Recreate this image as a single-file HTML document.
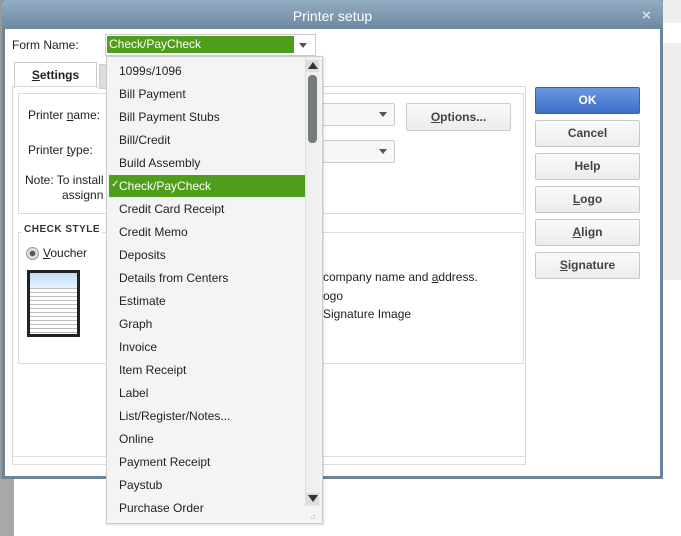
<!DOCTYPE html><html><head><style>
body{margin:0;width:681px;height:536px;position:relative;overflow:hidden;background:#fff;font-family:"Liberation Sans",sans-serif;font-size:12px;color:#222}
.a{position:absolute}
.btn{position:absolute;left:535px;width:103px;height:25px;border:1px solid #c8c8c8;border-radius:2px;background:linear-gradient(#fafafa,#ececec);font-weight:bold;color:#444;text-align:center;line-height:25px}
.it{position:absolute;left:119px;font-size:12px;color:#222}
.arr{position:absolute;width:0;height:0;border-left:4px solid transparent;border-right:4px solid transparent;border-top:5px solid #555}
</style></head><body>
<div class="a" style="left:663px;top:0;width:18px;height:23px;background:#eee"></div>
<div class="a" style="left:663px;top:43px;width:18px;height:237px;background:#efefef"></div>
<div class="a" style="left:0;top:0;width:2px;height:536px;background:#999"></div>
<div class="a" style="left:0;top:479px;width:14px;height:57px;background:#a8a8a8"></div>
<div class="a" style="left:2px;top:0;width:655px;height:476px;border:3px solid #6d8499;border-top:none;background:#fff"></div>
<div class="a" style="left:2px;top:0;width:661px;height:29px;background:linear-gradient(#93adc3,#6c88a0);border-radius:3px 3px 0 0;color:#fff;font-size:14px;text-align:center;line-height:32px">Printer setup</div>
<div class="a" style="left:642px;top:7px;color:#dde;font-size:15px;font-weight:bold">×</div>
<div class="a" style="left:12px;top:38px;font-size:12px">Form Name:</div>
<div class="a" style="left:105px;top:34px;width:209px;height:20px;border:1px solid #ccc;background:#fff"></div>
<div class="a" style="left:107px;top:36px;width:187px;height:17px;background:#4f9e1b;color:#fff;line-height:17px;padding-left:2px;box-sizing:border-box">Check/PayCheck</div>
<div class="arr" style="left:299px;top:43px"></div>
<div class="a" style="left:14px;top:62px;width:81px;height:25px;border:1px solid #ccc;border-bottom:none;background:#fff;font-weight:bold;text-align:center;line-height:25px"><u>S</u>ettings</div>
<div class="a" style="left:99px;top:64px;width:10px;height:23px;background:#ddd;border:1px solid #ccc"></div>
<div class="a" style="left:12px;top:86px;width:512px;height:377px;border:1px solid #d8d8d8"></div>
<div class="a" style="left:18px;top:93px;width:504px;height:119px;border:1px solid #ddd"></div>
<div class="a" style="left:28px;top:108px">Printer <u>n</u>ame:</div>
<div class="a" style="left:28px;top:143px">Printer <u>t</u>ype:</div>
<div class="a" style="left:25px;top:173px">Note: To install</div>
<div class="a" style="left:62px;top:188px">assignn</div>
<div class="a" style="left:300px;top:103px;width:93px;height:21px;border:1px solid #ccc;border-radius:2px;background:#f7f7f7"></div>
<div class="arr" style="left:379px;top:112px"></div>
<div class="a" style="left:300px;top:140px;width:93px;height:21px;border:1px solid #ccc;border-radius:2px;background:#f7f7f7"></div>
<div class="arr" style="left:379px;top:149px"></div>
<div class="a" style="left:406px;top:103px;width:103px;height:26px;border:1px solid #ccc;border-radius:2px;background:linear-gradient(#fafafa,#ececec);font-weight:bold;color:#444;text-align:center;line-height:26px"><u>O</u>ptions...</div>
<div class="a" style="left:18px;top:232px;width:504px;height:130px;border:1px solid #ddd"></div>
<div class="a" style="left:22px;top:224px;background:#fff;padding:0 2px;font-size:10px;font-weight:bold;color:#333;letter-spacing:.5px">CHECK STYLE</div>
<div class="a" style="left:26px;top:247px;width:11px;height:11px;border-radius:50%;border:1px solid #999;background:radial-gradient(#555 30%,#ddd 40%)"></div>
<div class="a" style="left:43px;top:246px"><u>V</u>oucher</div>
<div class="a" style="left:27px;top:270px;width:53px;height:67px;background:#222"></div>
<div class="a" style="left:30px;top:273px;width:47px;height:61px;background:repeating-linear-gradient(#fff 0 3px,#bbb 3px 4px)"></div>
<div class="a" style="left:30px;top:273px;width:47px;height:15px;background:linear-gradient(#bfdcf6,#e8f3fc)"></div>
<div class="a" style="left:323px;top:270px">company name and <u>a</u>ddress.</div>
<div class="a" style="left:323px;top:289px">ogo</div>
<div class="a" style="left:323px;top:307px">Signature Image</div>
<div class="a" style="left:12px;top:456px;width:512px;height:7px;border:1px solid #ddd"></div>
<div class="btn" style="top:87px;background:linear-gradient(#6a98e0,#3e6ec9);border-color:#3a62a8;color:#fff">OK</div>
<div class="btn" style="top:120px">Cancel</div>
<div class="btn" style="top:153px">Help</div>
<div class="btn" style="top:186px"><u>L</u>ogo</div>
<div class="btn" style="top:219px"><u>A</u>lign</div>
<div class="btn" style="top:252px"><u>S</u>ignature</div>
<div class="a" style="left:106px;top:56px;width:215px;height:466px;background:#f4f4f4;border:1px solid #ccc;box-shadow:1px 1px 2px rgba(0,0,0,.15)"></div>
<div class="a" style="left:305px;top:57px;width:14px;height:450px;background:#f0f0f0;border-left:1px solid #ddd"></div>
<div class="a" style="left:306px;top:60px;width:13px;height:12px;background:#ddd"></div>
<div class="a" style="left:308px;top:62px;width:0;height:0;border-left:5px solid transparent;border-right:5px solid transparent;border-bottom:7px solid #333"></div>
<div class="a" style="left:308px;top:75px;width:9px;height:68px;background:#767b7c;border-radius:4px"></div>
<div class="a" style="left:306px;top:493px;width:13px;height:12px;background:#ddd"></div>
<div class="a" style="left:308px;top:495px;width:0;height:0;border-left:5px solid transparent;border-right:5px solid transparent;border-top:7px solid #333"></div>
<div class="a" style="left:109px;top:175px;width:196px;height:22px;background:#4f9e1b"></div>
<div class="a" style="left:111px;top:179px;color:#fff;font-size:10px">✓</div>
<div class="it" style="top:64px">1099s/1096</div>
<div class="it" style="top:87px">Bill Payment</div>
<div class="it" style="top:110px">Bill Payment Stubs</div>
<div class="it" style="top:133px">Bill/Credit</div>
<div class="it" style="top:156px">Build Assembly</div>
<div class="it" style="top:179px;color:#fff">Check/PayCheck</div>
<div class="it" style="top:202px">Credit Card Receipt</div>
<div class="it" style="top:225px">Credit Memo</div>
<div class="it" style="top:248px">Deposits</div>
<div class="it" style="top:271px">Details from Centers</div>
<div class="it" style="top:294px">Estimate</div>
<div class="it" style="top:317px">Graph</div>
<div class="it" style="top:340px">Invoice</div>
<div class="it" style="top:363px">Item Receipt</div>
<div class="it" style="top:386px">Label</div>
<div class="it" style="top:409px">List/Register/Notes...</div>
<div class="it" style="top:432px">Online</div>
<div class="it" style="top:455px">Payment Receipt</div>
<div class="it" style="top:478px">Paystub</div>
<div class="it" style="top:501px">Purchase Order</div>
<div class="a" style="left:310px;top:512px;color:#aaa;font-size:8px">⠴</div>
</body></html>
